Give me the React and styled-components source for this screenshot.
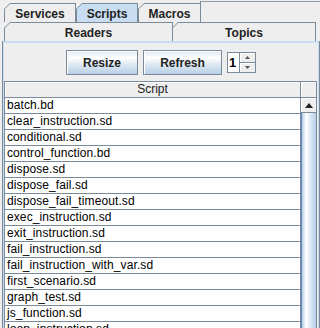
import React from 'react';
import styled, { createGlobalStyle } from 'styled-components';

const scripts = [
    'batch.bd',
    'clear_instruction.sd',
    'conditional.sd',
    'control_function.bd',
    'dispose.sd',
    'dispose_fail.sd',
    'dispose_fail_timeout.sd',
    'exec_instruction.sd',
    'exit_instruction.sd',
    'fail_instruction.sd',
    'fail_instruction_with_var.sd',
    'first_scenario.sd',
    'graph_test.sd',
    'js_function.sd',
    'loop_instruction.sd',
    'macro_call.sd',
];

const App = () => (
    <>
        <GlobalStyle />
        <Frame>
            <TabRow>
                <Tab width={72}><TabFill>Services</TabFill></Tab>
                <Tab width={62} selected><TabFill selected>Scripts</TabFill></Tab>
                <Tab width={63}><TabFill>Macros</TabFill></Tab>
                <TabFiller />
            </TabRow>
            <TabRow>
                <Tab width={169}><TabFill>Readers</TabFill></Tab>
                <Tab width={144} overlap><TabFill>Topics</TabFill></Tab>
            </TabRow>
            <ContentPanel>
                <ContentInner>
                    <Toolbar>
                        <Button width={72}>Resize</Button>
                        <Button width={79}>Refresh</Button>
                        <Spinner>
                            <SpinnerField>1</SpinnerField>
                            <SpinnerArrows>
                                <ArrowButton>
                                    <svg width="5" height="3" viewBox="0 0 5 3"><polygon points="2.5,0 5,3 0,3" fill="#555" /></svg>
                                </ArrowButton>
                                <ArrowButton>
                                    <svg width="5" height="3" viewBox="0 0 5 3"><polygon points="0,0 5,0 2.5,3" fill="#555" /></svg>
                                </ArrowButton>
                            </SpinnerArrows>
                        </Spinner>
                    </Toolbar>
                    <ScrollPane>
                        <HeaderRow>
                            <HeaderCell>Script</HeaderCell>
                            <Corner />
                        </HeaderRow>
                        <Body>
                            <Rows>
                                {scripts.map((s) => (
                                    <Row key={s}>{s}</Row>
                                ))}
                            </Rows>
                            <ScrollBar>
                                <UpButton>
                                    <svg width="8" height="5" viewBox="0 0 8 5"><polygon points="4,0 8,5 0,5" fill="#222" /></svg>
                                </UpButton>
                                <Thumb />
                            </ScrollBar>
                        </Body>
                    </ScrollPane>
                </ContentInner>
            </ContentPanel>
        </Frame>
    </>
);

/* ----------------- Styles ----------------- */
const GlobalStyle = createGlobalStyle`
    html, body {
        margin: 0;
        padding: 0;
        background: #eeeeee;
        overflow: hidden;
    }
    body {
        font-family: "Liberation Sans", Arial, sans-serif;
        font-size: 12px;
        color: #000;
    }
`;

const Frame = styled.div`
    width: 318px;
    height: 328px;
    padding-left: 2px;
    overflow: hidden;
`;

const TabRow = styled.div`
    display: flex;
    padding-left: 2px;
    &:first-child {
        padding-top: 3px;
    }
`;

const TabFiller = styled.div`
    flex: 1;
    margin: -2px 0 0 -1px;
    border-top: 1px solid #8e9aa6;
    border-left: 1px solid #7a8a99;
`;

const Tab = styled.div`
    width: ${(p) => p.width}px;
    height: 19px;
    box-sizing: border-box;
    padding: 1px 1px 0 1px;
    background: #7a8a99;
    margin-left: ${(p) => (p.overlap ? '-1px' : '0')};
    clip-path: polygon(0 6px, 6px 0, 100% 0, 100% 100%, 0 100%);
`;

const TabFill = styled.div`
    height: 100%;
    display: flex;
    align-items: center;
    justify-content: center;
    background: ${(p) => (p.selected ? '#c8ddf2' : '#eeeeee')};
    clip-path: polygon(0 5px, 5px 0, 100% 0, 100% 100%, 0 100%);
    font-weight: bold;
    font-size: 12px;
    color: #222;
    padding-top: 1px;
    box-sizing: border-box;
`;

const ContentPanel = styled.div`
    border-left: 1px solid #7a8a99;
    border-right: 1px solid #7a8a99;
    height: 300px;
`;

const ContentInner = styled.div`
    border-top: 2px solid #c8ddf2;
    border-left: 1px solid #c8ddf2;
    border-right: 1px solid #c8ddf2;
    height: 100%;
`;

const Toolbar = styled.div`
    display: flex;
    justify-content: center;
    align-items: center;
    gap: 5px;
    padding-top: 7px;
    height: 25px;
    margin-bottom: 6px;
`;

const Button = styled.div`
    width: ${(p) => p.width}px;
    height: 25px;
    box-sizing: border-box;
    border: 1px solid #7a8a99;
    box-shadow: inset 1px 1px 0 #ffffff;
    background: linear-gradient(to bottom, #dde8f3 0%, #ffffff 30%, #dde8f3 60%, #b8cfe5 100%);
    display: flex;
    align-items: center;
    justify-content: center;
    font-weight: bold;
    font-size: 12px;
    color: #222;
`;

const Spinner = styled.div`
    display: flex;
    height: 21px;
`;

const SpinnerField = styled.div`
    width: 12px;
    box-sizing: border-box;
    border: 1px solid #7a8a99;
    border-right: none;
    background: #ffffff;
    font-weight: bold;
    font-size: 13px;
    line-height: 19px;
    padding-left: 1px;
`;

const SpinnerArrows = styled.div`
    display: flex;
    flex-direction: column;
    width: 17px;
`;

const ArrowButton = styled.div`
    flex: 1;
    box-sizing: border-box;
    border: 1px solid #7a8a99;
    & + & {
        border-top: 1px solid #7a8a99;
        margin-top: -1px;
    }
    background: #eeeeee;
    box-shadow: inset 1px 1px 0 #ffffff;
    display: flex;
    align-items: center;
    justify-content: center;
`;

const ScrollPane = styled.div`
    margin-right: 1px;
    border: 1px solid #7a8a99;
    border-bottom: none;
    background: #ffffff;
`;

const HeaderRow = styled.div`
    display: flex;
    height: 15px;
    border-bottom: 1px solid #7a8a99;
    background: #eeeeee;
`;

const HeaderCell = styled.div`
    flex: 1;
    text-align: center;
    line-height: 15px;
    font-size: 12px;
    color: #222;
    box-shadow: inset 1px 1px 0 #ffffff;
`;

const Corner = styled.div`
    width: 15px;
    border-left: 1px solid #7a8a99;
    box-shadow: inset 1px 1px 0 #ffffff;
`;

const Body = styled.div`
    display: flex;
`;

const Rows = styled.div`
    flex: 1;
    border-right: 1px solid #7a8a99;
`;

const Row = styled.div`
    height: 15px;
    line-height: 15px;
    border-bottom: 1px solid #7a8a99;
    padding-left: 2px;
    font-size: 12px;
    letter-spacing: 0.1px;
    color: #000;
    white-space: nowrap;
`;

const ScrollBar = styled.div`
    width: 15px;
    display: flex;
    flex-direction: column;
    background: #eeeeee;
`;

const UpButton = styled.div`
    height: 15px;
    box-sizing: border-box;
    border-bottom: 1px solid #7a8a99;
    box-shadow: inset 1px 1px 0 #ffffff;
    display: flex;
    align-items: center;
    justify-content: center;
`;

const Thumb = styled.div`
    flex: 1;
    box-sizing: border-box;
    border-left: 1px solid #6382bf;
    background: linear-gradient(to right, #b8cfe5 0%, #ffffff 30%, #dde8f3 60%, #b8cfe5 100%);
`;

export default App;
